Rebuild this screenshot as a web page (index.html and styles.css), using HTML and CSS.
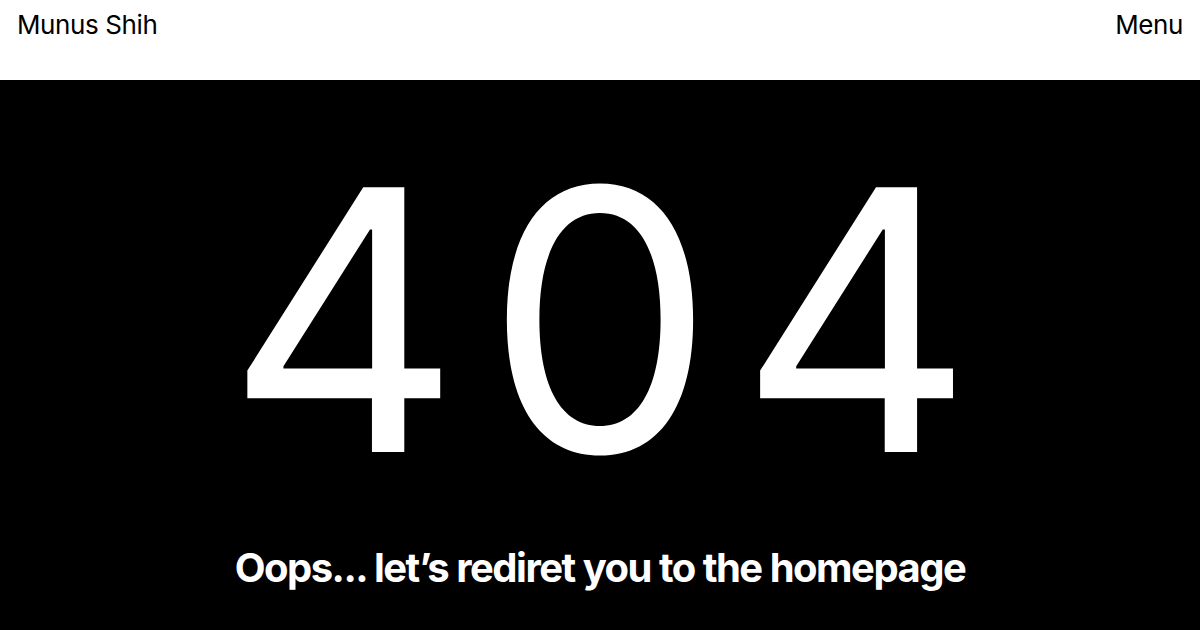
FILE: index.html
```html
<!DOCTYPE html>
<html lang="en">
<head>
<meta charset="utf-8">
<title>404 - Munus Shih</title>
<link rel="stylesheet" href="styles.css">
</head>
<body>
<header class="site-header">
  <a class="brand" href="#">Munus Shih</a>
  <a class="menu" href="#">Menu</a>
</header>
<main class="not-found">
  <h1 class="code">404</h1>
  <p class="message">Oops... let’s rediret you to the homepage</p>
</main>
</body>
</html>
```
FILE: styles.css
```css
* { box-sizing: border-box; margin: 0; padding: 0; }
html, body { height: 100%; }
body {
  font-family: Inter, "Noto Sans", sans-serif;
  background: #000;
  color: #fff;
  overflow: hidden;
}
.site-header {
  height: 80px;
  background: #fff;
  display: flex;
  justify-content: space-between;
  align-items: flex-start;
  padding: 9px 17px 0 17px;
}
.site-header a {
  color: #000;
  text-decoration: none;
  font-size: 26px;
  font-weight: 400;
  letter-spacing: -0.4px;
  line-height: 32px;
}
.not-found {
  height: 550px;
  display: flex;
  flex-direction: column;
  align-items: center;
  padding-top: 70px;
}
.code {
  font-size: 364px;
  font-weight: 400;
  line-height: 340px;
  letter-spacing: 24px;
  text-indent: 24px;
}
.message {
  margin-top: 54px;
  font-size: 40px;
  font-weight: 700;
  letter-spacing: -1.5px;
  line-height: 48px;
}
```
